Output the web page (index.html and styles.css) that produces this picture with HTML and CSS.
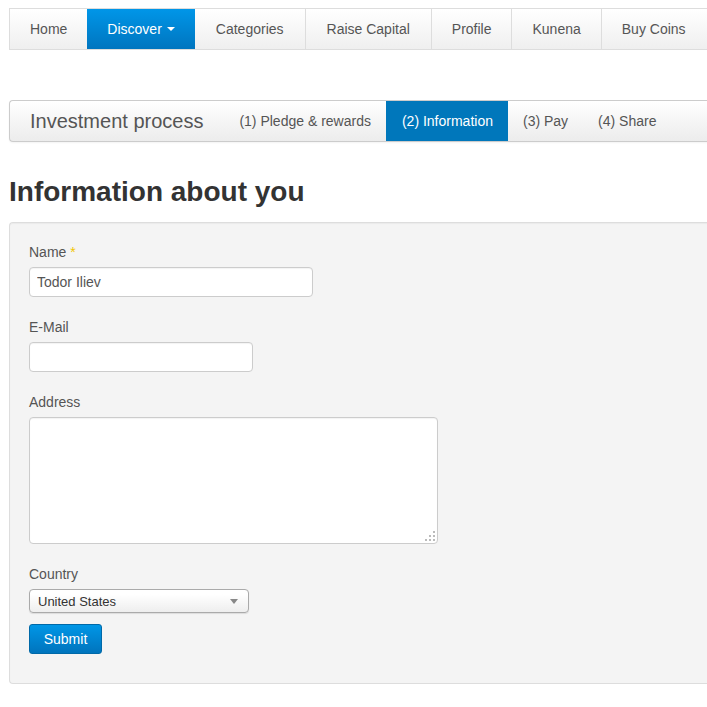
FILE: index.html
```html
<!DOCTYPE html>
<html lang="en">
<head>
    <meta charset="UTF-8">
    <title>Investment process - Information</title>
    <link rel="stylesheet" href="styles.css">
</head>
<body>
    <div class="page">
        <ul class="mainmenu">
            <li><a href="#">Home</a></li>
            <li class="active"><a href="#">Discover <span class="caret"></span></a></li>
            <li><a class="wide" href="#">Categories</a></li>
            <li><a class="wide" href="#">Raise Capital</a></li>
            <li><a href="#">Profile</a></li>
            <li><a href="#">Kunena</a></li>
            <li><a href="#">Buy Coins</a></li>
        </ul>

        <div class="steps">
            <span class="steps-title">Investment process</span>
            <a class="step" href="#">(1) Pledge &amp; rewards</a>
            <a class="step active" href="#">(2) Information</a>
            <a class="step" href="#">(3) Pay</a>
            <a class="step" href="#">(4) Share</a>
        </div>

        <h2 class="page-title">Information about you</h2>

        <form class="well">
            <label class="field-label">Name <span class="star">*</span></label>
            <input class="input-name" type="text" value="Todor Iliev">

            <label class="field-label">E-Mail</label>
            <input class="input-mail" type="text">

            <label class="field-label">Address</label>
            <div class="textarea-wrap">
                <textarea class="input-address"></textarea>
                <svg class="grip" width="11" height="11" viewBox="0 0 11 11">
                    <g fill="#bbb">
                        <rect x="8" y="0" width="2" height="2"/>
                        <rect x="4" y="4" width="2" height="2"/>
                        <rect x="8" y="4" width="2" height="2"/>
                        <rect x="0" y="8" width="2" height="2"/>
                        <rect x="4" y="8" width="2" height="2"/>
                        <rect x="8" y="8" width="2" height="2"/>
                    </g>
                </svg>
            </div>

            <label class="field-label">Country</label>
            <div class="select-box">
                <span>United States</span>
                <span class="select-arrow"></span>
            </div>

            <button class="btn-submit" type="button">Submit</button>
        </form>
    </div>
</body>
</html>
```

FILE: styles.css
```css
body {
    margin: 0;
    padding: 0;
    background-color: #fff;
    font-family: "Liberation Sans", Arial, sans-serif;
    font-size: 14px;
    color: #555;
    overflow: hidden;
}
.page {
    padding: 8px 0 0 9px;
    width: 760px;
}
.mainmenu {
    display: flex;
    list-style: none;
    margin: 0;
    padding: 0;
    height: 40px;
    border: 1px solid #ddd;
    border-right: none;
    background: linear-gradient(#fff, #efefef);
}
.mainmenu li {
    border-left: 1px solid #ddd;
}
.mainmenu li:first-child { border-left: none; }
.mainmenu a {
    display: flex;
    align-items: center;
    height: 40px;
    padding: 0 20px;
    color: #555;
    text-decoration: none;
}
.mainmenu a.wide { padding: 0 21px; }
.mainmenu .active {
    border-left: none;
}
.mainmenu .active + li { border-left: none; }
.mainmenu .active a {
    color: #fff;
    background: linear-gradient(#0096e8, #0075bf);
}
.caret {
    display: inline-block;
    margin-left: 5px;
    border-top: 4px solid #fff;
    border-left: 4px solid transparent;
    border-right: 4px solid transparent;
}
.steps {
    display: flex;
    align-items: center;
    margin-top: 50px;
    height: 40px;
    border: 1px solid #ccc;
    border-right: none;
    border-radius: 4px 0 0 4px;
    background: linear-gradient(#fff, #ececec);
    box-shadow: 0 1px 2px rgba(0, 0, 0, 0.05);
}
.steps-title {
    font-size: 20px;
    color: #555;
    padding-left: 20px;
    margin-right: 21px;
}
.step {
    display: flex;
    align-items: center;
    height: 40px;
    padding: 0 15px;
    color: #555;
    text-decoration: none;
}
.step.active {
    background-color: #0077bb;
    color: #fff;
    padding: 0 15px 0 16px;
}
.page-title {
    margin: 33px 0 13px 0;
    font-size: 28px;
    font-weight: bold;
    color: #333;
    line-height: 34px;
}
.well {
    display: flex;
    flex-direction: column;
    align-items: flex-start;
    background-color: #f4f4f4;
    border: 1px solid #ddd;
    border-right: none;
    border-radius: 4px 0 0 4px;
    padding: 19px 19px 29px 19px;
    box-shadow: inset 0 1px 1px rgba(0, 0, 0, 0.04);
}
.field-label {
    display: block;
    color: #555;
    line-height: 20px;
    margin-bottom: 5px;
}
.star { color: #f2c500; }
.well input,
.well textarea {
    box-sizing: border-box;
    border: 1px solid #ccc;
    border-radius: 4px;
    background-color: #fff;
    font-family: "Liberation Sans", Arial, sans-serif;
    font-size: 14px;
    color: #555;
    padding: 4px 7px;
    margin: 0 0 20px 0;
    box-shadow: inset 0 1px 1px rgba(0, 0, 0, 0.05);
}
.input-name { width: 284px; height: 30px; }
.input-mail { width: 224px; height: 30px; }
.textarea-wrap {
    position: relative;
    margin-bottom: 20px;
}
.well .input-address {
    display: block;
    width: 409px;
    height: 127px;
    resize: none;
    margin: 0;
}
.grip {
    position: absolute;
    right: 2px;
    bottom: 2px;
}
.select-box {
    box-sizing: border-box;
    display: flex;
    align-items: center;
    justify-content: space-between;
    width: 220px;
    height: 24px;
    padding: 0 10px 0 8px;
    border: 1px solid #aaa;
    border-radius: 4px;
    background: linear-gradient(#fff 20%, #eee);
    font-size: 13px;
    color: #333;
    box-shadow: 0 1px 1px rgba(0, 0, 0, 0.1);
}
.select-arrow {
    border-top: 5px solid #888;
    border-left: 4px solid transparent;
    border-right: 4px solid transparent;
}
.btn-submit {
    margin-top: 11px;
    width: 73px;
    height: 30px;
    border: 1px solid #0069a8;
    border-radius: 3px;
    background: linear-gradient(#0096e6, #0074bd);
    color: #fff;
    font-family: "Liberation Sans", Arial, sans-serif;
    font-size: 14px;
    cursor: pointer;
}
```
